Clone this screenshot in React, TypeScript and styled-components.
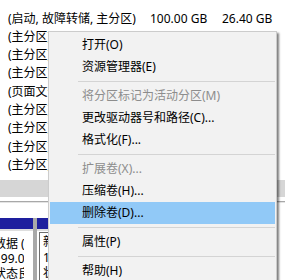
import React from "react";
import styled, { createGlobalStyle } from "styled-components";

const Global = createGlobalStyle`
  html, body {
    margin: 0;
    padding: 0;
    background: #ffffff;
    overflow: hidden;
  }
  body {
    width: 285px;
    height: 280px;
    font-family: "Noto Sans", "Noto Sans CJK SC", sans-serif;
    font-size: 12px;
    color: #000000;
  }
`;

const Screen = styled.div`
  position: relative;
  width: 285px;
  height: 280px;
  overflow: hidden;
  background: #ffffff;
  display: flex;
  flex-direction: column;
`;

const VolumeList = styled.div`
  padding-top: 9.4px;
  display: flex;
  flex-direction: column;
`;

const VolumeRow = styled.div`
  display: grid;
  grid-template-columns: 142px 72px 1fr;
  padding-left: 8px;
  height: 18.3px;
  align-items: center;
  white-space: nowrap;
  line-height: 18px;
`;

const StatusCell = styled.span`
  overflow: visible;
`;

const ScrollTrack = styled.div`
  margin-top: 6px;
  height: 17px;
  background: #d6d6d6;
  flex-shrink: 0;
`;

const Splitter = styled.div`
  margin-top: 4px;
  height: 2px;
  box-sizing: border-box;
  border-top: 1px solid #a8a8a8;
  border-bottom: 1px solid #e4e4e4;
  flex-shrink: 0;
`;

const DiskMap = styled.div`
  margin-top: 15px;
  display: flex;
  flex: 1;
  min-height: 0;
`;

const Partition = styled.div<{ $width: number }>`
  width: ${(p) => p.$width}px;
  flex-shrink: 0;
  display: flex;
  flex-direction: column;
  overflow: hidden;
`;

const PartitionHeader = styled.div`
  height: 11px;
  background: #1e1f9e;
  border-bottom: 2px solid #dedede;
  flex-shrink: 0;
`;

const PartitionBody = styled.div<{ $selected?: boolean }>`
  flex: 1;
  display: flex;
  flex-direction: column;
  overflow: hidden;
  padding-top: ${(p) => (p.$selected ? "0" : "4px")};
  margin-left: ${(p) => (p.$selected ? "2px" : "0")};
  border-left: ${(p) => (p.$selected ? "1px solid #6e6e6e" : "none")};
  border-top: ${(p) => (p.$selected ? "1px solid #6e6e6e" : "none")};
  margin-top: ${(p) => (p.$selected ? "1px" : "0")};
`;

const PartitionText = styled.div<{ $shift: number; $clip: number }>`
  width: ${(p) => p.$clip}px;
  overflow: hidden;
  white-space: nowrap;
  line-height: 18px;
  height: 18px;
  text-indent: ${(p) => p.$shift}px;
`;

const PartitionGap = styled.div`
  width: 4px;
  flex-shrink: 0;
  background: #a9a9a9;
`;

const ContextMenu = styled.div`
  position: absolute;
  left: 48px;
  top: 31px;
  width: 229px;
  box-sizing: border-box;
  background: #f2f2f2;
  border: 1px solid #cccccc;
  padding: 2px 1px;
  box-shadow: 2px 2px 2px rgba(0, 0, 0, 0.5);
  display: flex;
  flex-direction: column;
`;

const MenuItem = styled.div<{ $disabled?: boolean; $active?: boolean }>`
  height: 22px;
  line-height: 22px;
  padding-left: 32px;
  white-space: nowrap;
  color: ${(p) => (p.$disabled ? "#8d8d8d" : "#000000")};
  background: ${(p) => (p.$active ? "#91c9f7" : "transparent")};
`;

const MenuSeparator = styled.div`
  height: 7px;
  display: flex;
  align-items: center;
  &::after {
    content: "";
    flex: 1;
    height: 1px;
    margin-left: 28px;
    background: #d4d4d4;
  }
`;

type Entry =
  | { kind: "item"; label: string; disabled?: boolean; active?: boolean }
  | { kind: "sep" };

const menu: Entry[] = [
  { kind: "item", label: "打开(O)" },
  { kind: "item", label: "资源管理器(E)" },
  { kind: "sep" },
  { kind: "item", label: "将分区标记为活动分区(M)", disabled: true },
  { kind: "item", label: "更改驱动器号和路径(C)..." },
  { kind: "item", label: "格式化(F)..." },
  { kind: "sep" },
  { kind: "item", label: "扩展卷(X)...", disabled: true },
  { kind: "item", label: "压缩卷(H)..." },
  { kind: "item", label: "删除卷(D)...", active: true },
  { kind: "sep" },
  { kind: "item", label: "属性(P)" },
  { kind: "sep" },
  { kind: "item", label: "帮助(H)" },
];

const volumes = [
  { status: "(启动, 故障转储, 主分区)", size: "100.00 GB", free: "26.40 GB" },
  { status: "(主分区)", size: "99.00 GB", free: "60.12 GB" },
  { status: "(主分区)", size: "100.00 GB", free: "85.33 GB" },
  { status: "(主分区)", size: "100.00 GB", free: "71.08 GB" },
  { status: "(页面文件, 主分区)", size: "99.00 GB", free: "40.56 GB" },
  { status: "(主分区)", size: "100.00 GB", free: "92.17 GB" },
  { status: "(主分区)", size: "100.00 GB", free: "55.90 GB" },
  { status: "(主分区)", size: "100.00 GB", free: "88.24 GB" },
  { status: "(主分区)", size: "100.00 GB", free: "97.61 GB" },
];

export default function App() {
  return (
    <>
      <Global />
      <Screen>
        <VolumeList>
          {volumes.map((v, i) => (
            <VolumeRow key={i}>
              <StatusCell>{v.status}</StatusCell>
              <span>{v.size}</span>
              <span>{v.free}</span>
            </VolumeRow>
          ))}
        </VolumeList>
        <ScrollTrack />
        <Splitter />
        <DiskMap>
          <Partition $width={33}>
            <PartitionHeader />
            <PartitionBody>
              <PartitionText $shift={-6} $clip={24}>数据 (D:)</PartitionText>
              <PartitionText $shift={-6} $clip={24}>199.00 GB NTFS</PartitionText>
              <PartitionText $shift={-6} $clip={24}>状态良好 (主分区)</PartitionText>
            </PartitionBody>
          </Partition>
          <PartitionGap />
          <Partition $width={60}>
            <PartitionHeader />
            <PartitionBody $selected>
              <PartitionText $shift={3} $clip={57}>新加卷 (E:)</PartitionText>
              <PartitionText $shift={3} $clip={57}>100.00 GB NTFS</PartitionText>
              <PartitionText $shift={3} $clip={57}>状态良好 (主分区)</PartitionText>
            </PartitionBody>
          </Partition>
        </DiskMap>
        <ContextMenu>
          {menu.map((m, i) =>
            m.kind === "sep" ? (
              <MenuSeparator key={i} />
            ) : (
              <MenuItem key={i} $disabled={m.disabled} $active={m.active}>
                {m.label}
              </MenuItem>
            )
          )}
        </ContextMenu>
      </Screen>
    </>
  );
}
